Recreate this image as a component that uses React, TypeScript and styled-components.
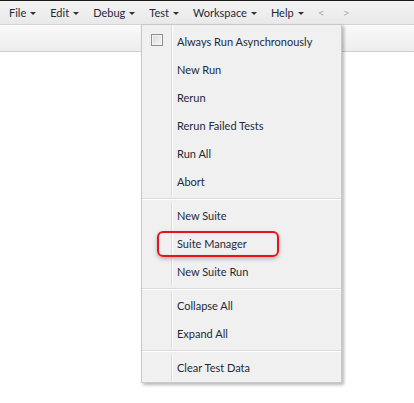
import styled, { createGlobalStyle } from "styled-components";

const GlobalStyle = createGlobalStyle`
	html, body {
		margin: 0;
		padding: 0;
		background: #ffffff;
	}

	body {
		font-family: Lato, "Noto Sans", sans-serif;
		font-size: 11px;
		color: #1e2a38;
	}
`;

const Page = styled.div`
	position: relative;
	width: 414px;
	height: 403px;
	overflow: hidden;
	background: #ffffff;
`;

const MenuBar = styled.nav`
	height: 23px;
	border-top: 1px solid #1a1a1a;
	border-bottom: 1px solid #d3d3d3;
	background: linear-gradient(#f3f3f3, #e9e9e9);
	display: flex;
	align-items: center;
	padding-left: 9px;
	font-size: 11px;
`;

const MenuItem = styled.div`
	display: flex;
	align-items: center;
	gap: 4px;
	margin-right: 14px;
	color: #1e2a38;
	white-space: nowrap;
`;

const Caret = styled.span`
	width: 0;
	height: 0;
	border-left: 3px solid transparent;
	border-right: 3px solid transparent;
	border-top: 3px solid #333;
	margin-top: 1px;
`;

const NavArrow = styled.span`
	color: #b4b4b4;
	font-size: 12px;
	margin-right: 18px;
`;

const Toolbar = styled.div`
	height: 25px;
	border-top: 1px solid #fdfdfd;
	border-bottom: 1px solid #cfcfcf;
	background: linear-gradient(#f9f9f9, #ededed);
`;

const DropDown = styled.section`
	position: absolute;
	left: 141px;
	top: 24px;
	width: 199px;
	padding: 3px 0 0;
	border: 1px solid #c9c9c9;
	background-color: #f0f0f0;
	background-image: linear-gradient(
		to right,
		transparent 29px,
		#dcdcdc 29px,
		#dcdcdc 30px,
		#ffffff 30px,
		#ffffff 31px,
		transparent 31px
	);
	box-shadow: 2px 2px 3px rgba(0, 0, 0, 0.28);
`;

const Item = styled.div<{ $marked?: boolean }>`
	position: relative;
	height: 28px;
	display: flex;
	align-items: center;
	color: #1e2a38;

	&::before {
		content: "";
		display: ${({ $marked }) => ($marked ? "block" : "none")};
		position: absolute;
		left: 15px;
		top: 1px;
		width: 118px;
		height: 22px;
		border: 2px solid #e8141c;
		border-radius: 6px;
		box-shadow: 0 2px 4px rgba(0, 0, 0, 0.25), inset 0 0 3px rgba(0, 0, 0, 0.08);
	}
`;

const Gutter = styled.span`
	width: 30px;
	display: flex;
	justify-content: center;
	flex-shrink: 0;
`;

const Label = styled.span`
	padding-left: 5px;
	padding-bottom: 2px;
`;

const CheckBox = styled.span`
	width: 10px;
	height: 10px;
	margin-top: -4px;
	border: 1px solid #8e8f8f;
	background: linear-gradient(135deg, #d9d9d9, #f7f7f7);
	box-shadow: inset 0 0 0 1px #f4f4f4;
`;

const Separator = styled.div`
	height: 6px;
	background: linear-gradient(
		#f0f0f0 0,
		#f0f0f0 2px,
		#dadada 2px,
		#dadada 3px,
		#ffffff 3px,
		#ffffff 4px,
		#f0f0f0 4px
	);
`;

type Entry = { label?: string; check?: boolean; marked?: boolean; separator?: boolean };

const entries: Entry[] = [
	{ label: "Always Run Asynchronously", check: true },
	{ label: "New Run" },
	{ label: "Rerun" },
	{ label: "Rerun Failed Tests" },
	{ label: "Run All" },
	{ label: "Abort" },
	{ separator: true },
	{ label: "New Suite" },
	{ label: "Suite Manager", marked: true },
	{ label: "New Suite Run" },
	{ separator: true },
	{ label: "Collapse All" },
	{ label: "Expand All" },
	{ separator: true },
	{ label: "Clear Test Data" },
];

const menus = ["File", "Edit", "Debug", "Test", "Workspace", "Help"];

export default function App() {
	return (
		<Page>
			<GlobalStyle />
			<MenuBar>
				{menus.map((name) => (
					<MenuItem key={name}>
						{name}
						<Caret />
					</MenuItem>
				))}
				<NavArrow>&lt;</NavArrow>
				<NavArrow>&gt;</NavArrow>
			</MenuBar>
			<Toolbar />

			<DropDown>
				{entries.map((e, i) =>
					e.separator ? (
						<Separator key={i} />
					) : (
						<Item key={i} $marked={e.marked}>
							<Gutter>{e.check && <CheckBox />}</Gutter>
							<Label>{e.label}</Label>
						</Item>
					)
				)}
			</DropDown>
		</Page>
	);
}
